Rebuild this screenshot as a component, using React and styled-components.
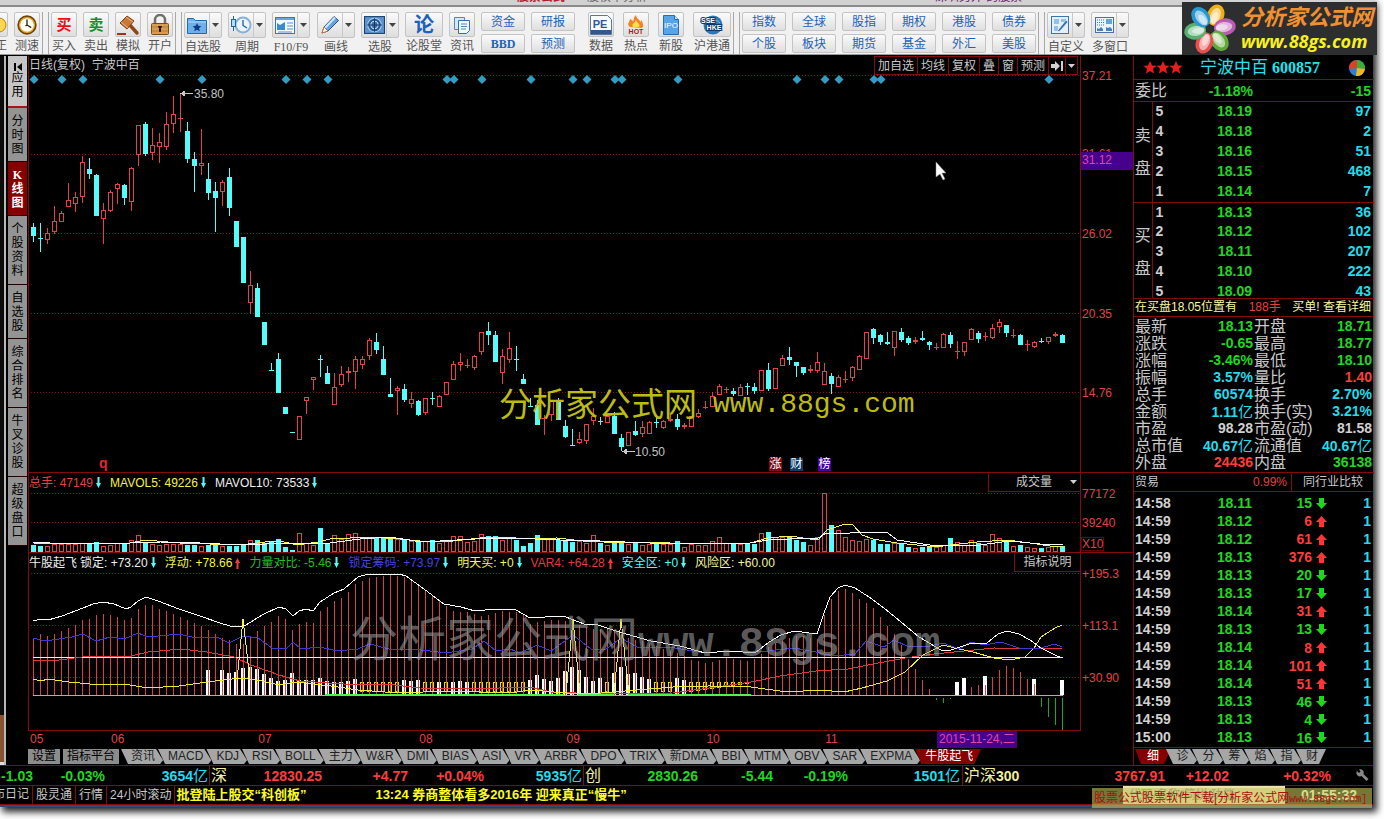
import React from 'react';
import styled, { createGlobalStyle } from 'styled-components';

const GlobalStyle = createGlobalStyle`
  * {
    box-sizing: border-box;
  }

  body {
    margin: 0;
    background: #fff;
    color: #c8c8c8;
    font-family: 'Liberation Sans', 'Noto Sans CJK SC', sans-serif;
    font-size: 12px;
    line-height: 16px;
  }

  button, input, select {
    margin: 0;
    padding: 0;
    border: 0;
    border-radius: 0;
    background: none;
    color: inherit;
    font: inherit;
  }

  a {
    color: inherit;
    text-decoration: none;
  }

  table {
    border-collapse: collapse;
    border-spacing: 0;
  }

  td, th {
    padding: 0;
    font-weight: normal;
    text-align: left;
  }
`;

const RED = '#e04444';
const CYAN = '#54fcfc';
const LINE = '#800c0c';

const colors = {
  green: '#1fd81f',
  red: '#ff3c3c',
  cyan: '#22dcec',
  white: '#d0d0d0',
};

const Page = styled.div`
  min-height: 100vh;
  padding: 0 11px 13px 0;
  overflow: hidden;
`;

const Frame = styled.div`
  position: relative;
  background: #000;
  box-shadow: 3px 4px 7px 1px rgba(0, 0, 0, 0.85);
  border-bottom: 2px solid #2c4c70;
`;

/* ---------- top bars ---------- */

const TitleStrip = styled.div`
  display: flex;
  align-items: flex-end;
  height: 7px;
  overflow: hidden;
  background: #d2d2d2;
  border-bottom: 2px solid #8a8a8a;
  padding-left: 517px;
  padding-bottom: 2px;
  gap: 24px;
  line-height: 12px;
`;

const StripText = styled.span`
  color: ${({ $color }) => $color};
  width: ${({ $width }) => $width}px;
  white-space: nowrap;
  font-weight: ${({ $bold }) => ($bold ? 'bold' : 'normal')};
`;

const Toolbar = styled.header`
  display: flex;
  height: 48px;
  padding-top: 5px;
  background: #f1f1f1;
  border-bottom: 1px solid #9a9a9a;
  color: #555;
  overflow: hidden;
`;

const Group = styled.div`
  display: flex;
  flex-shrink: 0;
  gap: ${({ $gap }) => $gap || 6}px;
  padding-left: ${({ $left }) => $left || 0}px;
`;

const Divider = styled.div`
  flex-shrink: 0;
  width: 7px;
  height: 42px;
  margin-left: 2px;
  border-left: 1px solid #a8a8a8;
  border-right: 1px solid #a8a8a8;
`;

const Tool = styled.button`
  display: flex;
  flex-direction: column;
  align-items: center;
  gap: 1px;
  width: ${({ $wide }) => ($wide ? 38 : 26)}px;
  white-space: nowrap;
`;

const ToolFace = styled.span`
  display: flex;
  align-items: center;
  justify-content: center;
  width: 100%;
  height: 26px;
  border: 1px solid #c4c4c4;
  border-radius: 2px;
  background: linear-gradient(#fafafa, #dedede);
`;

const ToolArrow = styled.span`
  display: flex;
  align-items: center;
  justify-content: center;
  width: 12px;
  height: 24px;
  border-left: 1px solid #c8c8c8;
`;

const FaceIcon = styled.span`
  display: flex;
  flex: 1;
  align-items: center;
  justify-content: center;
`;

const ToolLabel = styled.span`
  font-family: ${({ $serif }) => ($serif ? "'Liberation Serif', serif" : 'inherit')};
`;

const CutTool = styled.div`
  display: flex;
  justify-content: flex-end;
  width: 8px;
  overflow: hidden;
`;

const PairColumn = styled.div`
  display: flex;
  flex-direction: column;
  gap: 3px;
`;

const SmallButton = styled.button`
  width: 44px;
  height: 19px;
  border: 1px solid #c4c4c4;
  border-radius: 2px;
  background: linear-gradient(#fafafa, #dfdfdf);
  color: #1c62b8;
  line-height: 16px;
  font-family: ${({ $serif }) => ($serif ? "'Liberation Serif', serif" : 'inherit')};
  font-weight: ${({ $serif }) => ($serif ? 'bold' : 'normal')};
`;

const Logo = styled.a`
  position: absolute;
  z-index: 2;
  top: 2px;
  right: -4px;
  display: flex;
  align-items: center;
  width: 195px;
  height: 53px;
  background: #2c2e2f;
`;

const LogoText = styled.span`
  display: flex;
  flex-direction: column;
  padding-left: 3px;
  font-weight: bold;
  font-style: italic;
  white-space: nowrap;
`;

const LogoName = styled.span`
  color: #f09030;
  font-size: 22px;
  line-height: 25px;
`;

const LogoUrl = styled.span`
  color: #f8f020;
  font-family: 'Open Sans', sans-serif;
  font-size: 18px;
  line-height: 22px;
`;

/* ---------- body ---------- */

const Body = styled.main`
  display: grid;
  grid-template-columns: 28px minmax(0, 1fr) 53px 240px;
  padding-top: 1px;
`;

const SideColumn = styled.div`
  display: flex;
`;

const Edge = styled.div`
  display: flex;
  flex-direction: column;
  justify-content: flex-end;
  width: 6px;
  margin-right: 2px;
  background: #0c0c0c;
  border-right: 2px solid #b8b8b8;
`;

const EdgeBlock = styled.div`
  height: 50px;
  background: #8a5230;
  border-bottom: 3px solid #ddd;
`;

const SideNav = styled.nav`
  width: 19px;
`;

const SideTab = styled.button`
  display: flex;
  flex-direction: column;
  align-items: center;
  justify-content: center;
  width: 19px;
  height: ${({ $chars }) => ($chars > 3 ? 69 : 54)}px;
  border-bottom: 1px solid #200;
  background: ${({ $active }) => ($active ? '#860000' : '#949494')};
  color: ${({ $active }) => ($active ? '#fff' : '#000')};
  font-weight: ${({ $active }) => ($active ? 'bold' : 'normal')};
  font-family: 'Liberation Serif', 'Noto Sans CJK SC', serif;
  line-height: 14px;
`;

const LightTab = styled(SideTab)`
  height: 52px;
  border-bottom: 2px solid #a01818;
  background: #c6c6c6;
`;

const Main = styled.div`
  display: grid;
  grid-template-rows: 417px 80px 178px 18px 16px;
  min-width: 0;
`;

const Pane = styled.section`
  position: relative;
  min-width: 0;
  border-left: 1px solid ${LINE};
  border-bottom: 1px solid ${LINE};
  overflow: hidden;
`;

const Plot = styled.svg`
  position: absolute;
  inset: 0;
  width: 100%;
  height: 100%;
`;

const PaneHead = styled.div`
  position: relative;
  z-index: 1;
  display: flex;
  justify-content: space-between;
  height: 19px;
  line-height: 18px;
  white-space: nowrap;
`;

const HeadTools = styled.div`
  display: flex;
  height: 19px;
  margin-right: 2px;
  border: 1px solid ${LINE};
  border-right: 0;
`;

const HeadButton = styled.button`
  padding: 0 3px;
  border-right: 1px solid ${LINE};
  line-height: 16px;
`;

const IconButton = styled(HeadButton)`
  display: flex;
  align-items: center;
  padding: 0 2px;
`;

const Legend = styled.div`
  display: flex;
  gap: 9px;
  line-height: 20px;
`;

const LegendItem = styled.span`
  display: flex;
  align-items: center;
  gap: 3px;
  color: ${({ $color }) => $color};
`;

const VolumeBox = styled.label`
  display: flex;
  align-items: center;
  width: 92px;
  padding: 0 3px 0 27px;
  border-left: 1px solid ${LINE};
  border-bottom: 1px solid ${LINE};
`;

const VolumeSelect = styled.select`
  flex: 1;
  appearance: none;
  line-height: 18px;
`;

const InfoButton = styled.button`
  width: 66px;
  border-left: 1px solid ${LINE};
  border-bottom: 1px solid ${LINE};
  line-height: 18px;
`;

const PlotNote = styled.span`
  position: absolute;
  left: ${({ $x }) => $x}px;
  top: ${({ $y }) => $y}px;
  color: #c0c0c0;
`;

const Badge = styled.button`
  position: absolute;
  bottom: 1px;
  left: ${({ $x }) => $x}px;
  width: 13px;
  height: 13px;
  background: ${({ $bg }) => $bg};
  color: #fff;
  line-height: 13px;
`;

const QMark = styled.span`
  position: absolute;
  left: 70px;
  bottom: 1px;
  color: #e02828;
  font-size: 14px;
  font-weight: bold;
`;

const Watermark = styled.span`
  position: absolute;
  left: 470px;
  top: 329px;
  display: flex;
  gap: 16px;
  color: #bcbc10;
  font-size: 33px;
  line-height: 40px;
  white-space: nowrap;
`;

const WatermarkUrl = styled.span`
  font-family: 'Liberation Mono', monospace;
  font-size: ${({ $size }) => $size}px;
  font-weight: ${({ $bold }) => ($bold ? 'bold' : 'normal')};
`;

const GrayMark = styled.span`
  position: absolute;
  left: 321px;
  top: 59px;
  color: rgba(150, 150, 150, 0.62);
  font-size: 48px;
  line-height: 56px;
  white-space: nowrap;
`;

const Cursor = styled.svg`
  position: absolute;
  left: 906px;
  top: 105px;
`;

const DateAxis = styled.div`
  position: relative;
  color: ${RED};
  line-height: 17px;
`;

const DateLabel = styled.span`
  position: absolute;
  left: ${({ $left }) => $left}%;
  padding-left: 2px;
`;

const DateNow = styled.span`
  position: absolute;
  left: 86.4%;
  width: 80px;
  background: #45008c;
  color: #e044a8;
  text-align: center;
  white-space: nowrap;
`;

const TabRow = styled.nav`
  display: flex;
  height: 15px;
  overflow: hidden;
  line-height: 15px;
  white-space: nowrap;
`;

const SlantGroup = styled.div`
  display: flex;
  padding-left: 4px;
`;

const PlainTab = styled.button`
  height: 15px;
  margin-right: 3px;
  padding: 0 4px;
  background: #8c8c8c;
  color: #000;
  line-height: 15px;
`;

const SlantTab = styled.button`
  height: 15px;
  margin-left: -5px;
  padding: 0 8px 0 10px;
  flex: ${({ $fill }) => ($fill ? '0 0 31px' : '0 0 auto')};
  background: #a6a6a6;
  color: #222;
  line-height: 15px;
  clip-path: polygon(0 0, calc(100% - 7px) 0, 100% 75%, calc(100% - 3px) 100%, 7px 100%);
`;

const ActiveTab = styled(SlantTab)`
  background: #860000;
  color: #fff;
  clip-path: polygon(0 0, 100% 0, calc(100% - 7px) 100%, 6px 100%);
`;

const FinalTab = styled(SlantTab)`
  clip-path: polygon(0 0, 100% 0, calc(100% - 7px) 100%, 7px 100%);
`;

const SmallTabs = styled(TabRow)`
  margin-top: 1px;
  padding-left: 6px;
`;

const SmallActive = styled(ActiveTab)`
  flex: 0 0 36px;
  padding: 0;
`;

/* ---------- price axis ---------- */

const Axis = styled.div`
  display: grid;
  grid-template-rows: 417px 80px 178px 18px 16px;
  color: ${RED};
`;

const AxisPane = styled.div`
  position: relative;
  border-left: 1px solid ${LINE};
  border-bottom: ${({ $open }) => ($open ? 'none' : `1px solid ${LINE}`)};
`;

const AxisLabel = styled.span`
  position: absolute;
  left: 1px;
  top: ${({ $y }) => $y - 8}px;
`;

const AxisNow = styled.span`
  position: absolute;
  left: 0;
  right: 0;
  top: 96px;
  height: 18px;
  padding-left: 1px;
  background: #45008c;
  color: #e044a8;
  line-height: 17px;
`;

const AxisUnit = styled.span`
  position: absolute;
  left: 0;
  bottom: 1px;
  width: 23px;
  height: 14px;
  border: 1px solid #600;
  line-height: 13px;
`;

/* ---------- quote panel ---------- */

const Quote = styled.aside`
  display: grid;
  grid-template-rows: 24px 22px 197px 18px 156px 19px 256px 17px;
  border-left: 1px solid ${LINE};
`;

const QuoteHead = styled.h1`
  display: flex;
  align-items: center;
  gap: 4px;
  margin: 0;
  padding: 0 9px 0 9px;
  border-bottom: 1px solid ${LINE};
  color: #22e4f0;
  font-size: 17px;
  font-weight: normal;
  line-height: 22px;
`;

const Stars = styled.svg`
  margin-right: 13px;
`;

const Code = styled.span`
  flex: 1;
  font-family: 'Liberation Serif', serif;
  font-size: 16px;
  font-weight: bold;
`;

const Num = styled.span`
  color: ${({ $color }) => colors[$color]};
  font-size: 14px;
  font-weight: bold;
  text-align: right;

  small {
    font-size: 15px;
    font-weight: normal;
  }
`;

const Ratio = styled.div`
  display: grid;
  grid-template-columns: 40px 78px 1fr;
  align-items: center;
  padding: 0 3px 0 1px;
  border-bottom: 1px solid ${LINE};
`;

const BigLabel = styled.span`
  font-size: 16px;
  white-space: nowrap;
`;

const BookWrap = styled.div`
  height: 197px;
  overflow: hidden;
  border-bottom: 1px solid ${LINE};
`;

const Book = styled.table`
  width: 100%;
  table-layout: fixed;
  font-size: 14px;
  line-height: 18px;

  tbody + tbody {
    border-top: 1px solid ${LINE};
  }

  tr {
    height: 20px;
  }
`;

const BookSide = styled.th`
  width: 18px;
  border-right: 1px solid ${LINE};
  font-size: 16px;
  line-height: 33px;
  text-align: center;
`;

const BookCell = styled.td`
  width: ${({ $width }) => ($width ? `${$width}px` : 'auto')};
  padding: 0 3px;
  text-align: ${({ $left }) => ($left ? 'left' : 'right')};
  vertical-align: top;
`;

const Notice = styled.a`
  display: flex;
  justify-content: space-between;
  padding: 0 3px 0 1px;
  border-bottom: 1px solid ${LINE};
  color: #f8f89c;
  line-height: 16px;
  white-space: nowrap;
`;

const Hot = styled.span`
  color: ${RED};
`;

const Stats = styled.dl`
  display: grid;
  grid-template-columns: 118px 118px;
  grid-auto-rows: 17px;
  column-gap: 1px;
  margin: 0;
  padding: 1px 2px 0 1px;
  border-bottom: 1px solid ${LINE};
`;

const Stat = styled.div`
  display: flex;
  justify-content: space-between;
  line-height: 17px;
  white-space: nowrap;

  dd {
    margin: 0;
  }
`;

const Sector = styled.div`
  display: grid;
  grid-template-columns: 40px 118px 1fr;
  border-bottom: 1px solid ${LINE};
  line-height: 18px;
`;

const SectorName = styled.span`
  padding-left: 1px;
`;

const SectorRate = styled.span`
  padding-right: 4px;
  border-right: 1px solid ${LINE};
  color: ${RED};
  text-align: right;
`;

const Compare = styled.button`
  text-align: center;
`;

const TickWrap = styled.div`
  padding: 2px 3px 0 1px;
  border-bottom: 1px solid ${LINE};
`;

const Ticks = styled.table`
  width: 100%;
  height: 253px;
  table-layout: fixed;
  line-height: 16px;
`;

const TickCell = styled.td`
  width: ${({ $width }) => ($width ? `${$width}px` : 'auto')};
  text-align: ${({ $left }) => ($left ? 'left' : 'right')};
`;

const TickVolume = styled.span`
  display: flex;
  align-items: center;
  justify-content: flex-end;
  gap: 4px;
`;

/* ---------- bottom bars ---------- */

const IndexBar = styled.section`
  display: grid;
  grid-template-columns: 209px 374px 379px 1fr;
  height: 21px;
  border-top: 1px solid ${LINE};
  border-bottom: 1px solid ${LINE};
`;

const IndexCell = styled.div`
  display: grid;
  grid-template-columns: ${({ $cols }) => $cols};
  align-items: center;
  white-space: nowrap;

  & + & {
    border-left: 1px solid ${LINE};
  }
`;

const IndexName = styled.span`
  padding-left: 1px;
  color: #f0f0a0;
  font-size: 16px;

  b {
    font-size: 14px;
  }
`;

const WrenchButton = styled.button`
  display: flex;
  justify-self: end;
  margin-right: 4px;
`;

const NewsBar = styled.footer`
  position: relative;
  display: flex;
  height: 19px;
  line-height: 17px;
  border-bottom: 1px solid ${LINE};
  white-space: nowrap;
`;

const NewsTab = styled.button`
  height: 18px;
  padding: 0 3px;
  border-right: 1px solid ${LINE};
`;

const CutTab = styled(NewsTab)`
  display: flex;
  justify-content: flex-end;
  width: 33px;
  overflow: hidden;
`;

const News = styled.a`
  padding-left: 1px;
  margin-right: 68px;
  color: #fcfc20;
  font-size: 13px;
  font-weight: bold;
`;

const Search = styled.input`
  width: 162px;
  height: 18px;
  margin-left: auto;
  padding-left: 6px;
  background: #e8e4b0;

  &::placeholder {
    color: #777;
    opacity: 1;
  }
`;

const Clock = styled.time`
  width: 88px;
  color: #fcfcdc;
  font-size: 14px;
  font-weight: bold;
  line-height: 18px;
  text-align: center;
`;

const Promo = styled.a`
  position: absolute;
  top: 2px;
  right: 1px;
  width: 280px;
  height: 20px;
  padding-left: 2px;
  background: rgba(196, 196, 90, 0.6);
  color: #a81010;
  line-height: 20px;
`;

const PromoUrl = styled.span`
  font-family: 'Liberation Mono', monospace;
  font-size: 10px;
`;

/* ---------- data ---------- */

// [up or down, high, body top, body bottom, low]
const candles = [
  ['d', 223, 227, 236, 242], ['d', 223, 238, 239, 252], ['u', 228, 233, 240, 244], ['u', 206, 221, 232, 234],
  ['u', 211, 213, 222, 222], ['u', 183, 200, 207, 207], ['u', 192, 197, 204, 212], ['u', 156, 162, 197, 203],
  ['d', 158, 169, 174, 179], ['d', 174, 175, 216, 216], ['u', 203, 210, 219, 244], ['u', 190, 192, 211, 212],
  ['u', 183, 184, 189, 204], ['d', 184, 185, 198, 205], ['u', 167, 168, 202, 211], ['u', 125, 125, 155, 166],
  ['d', 122, 124, 154, 156], ['u', 128, 145, 153, 160], ['u', 133, 142, 147, 163], ['u', 112, 124, 147, 150],
  ['u', 96, 114, 124, 133], ['u', 93, 118, 119, 132], ['d', 122, 131, 159, 163], ['d', 152, 159, 166, 192],
  ['u', 129, 163, 166, 175], ['d', 163, 179, 193, 200], ['d', 182, 191, 198, 232], ['u', 180, 182, 192, 206],
  ['d', 168, 177, 208, 216], ['d', 221, 221, 247, 247], ['d', 237, 237, 283, 283], ['u', 271, 285, 303, 314],
  ['d', 283, 288, 317, 317], ['d', 322, 322, 345, 345], ['d', 363, 370, 371, 371], ['d', 353, 359, 393, 393],
  ['d', 407, 407, 414, 414], ['d', 432, 432, 433, 433], ['u', 416, 416, 440, 440], ['u', 397, 397, 401, 414],
  ['u', 377, 377, 380, 390], ['d', 355, 359, 360, 377], ['d', 366, 373, 384, 384], ['u', 373, 387, 405, 405],
  ['u', 366, 374, 385, 387], ['u', 367, 371, 373, 382], ['u', 356, 359, 372, 389], ['u', 356, 359, 365, 369],
  ['u', 338, 340, 356, 360], ['d', 333, 342, 350, 354], ['d', 346, 359, 375, 375], ['d', 378, 394, 397, 397],
  ['u', 386, 388, 391, 415], ['d', 384, 389, 400, 402], ['u', 392, 399, 404, 408], ['d', 400, 401, 415, 416],
  ['u', 398, 398, 413, 415], ['d', 392, 398, 399, 405], ['u', 395, 396, 407, 407], ['u', 382, 382, 395, 395],
  ['u', 361, 364, 380, 380], ['u', 353, 362, 365, 371], ['u', 359, 365, 366, 368], ['u', 355, 356, 368, 370],
  ['u', 332, 332, 352, 355], ['d', 322, 331, 335, 345], ['d', 331, 335, 362, 362], ['u', 349, 356, 373, 384],
  ['u', 332, 348, 360, 363], ['d', 346, 359, 360, 371], ['d', 374, 379, 384, 384], ['d', 398, 406, 407, 407],
  ['d', 400, 405, 425, 425], ['u', 415, 418, 419, 435], ['u', 400, 400, 415, 421], ['d', 398, 400, 420, 420],
  ['d', 420, 426, 437, 438], ['d', 429, 445, 446, 446], ['u', 432, 439, 443, 444], ['u', 424, 424, 441, 444],
  ['u', 408, 416, 421, 425], ['d', 417, 421, 422, 425], ['u', 416, 416, 423, 423], ['d', 412, 416, 434, 434],
  ['d', 434, 438, 447, 451], ['u', 432, 432, 446, 446], ['d', 421, 431, 435, 436], ['u', 421, 427, 434, 437],
  ['u', 421, 422, 434, 434], ['d', 417, 422, 423, 428], ['u', 420, 421, 428, 429], ['u', 414, 419, 421, 422],
  ['d', 414, 419, 427, 430], ['u', 423, 425, 427, 429], ['u', 416, 416, 427, 427], ['u', 409, 413, 417, 418],
  ['u', 401, 407, 408, 409], ['u', 392, 396, 407, 407], ['u', 384, 386, 395, 395], ['u', 387, 389, 390, 393],
  ['d', 388, 391, 394, 396], ['u', 384, 387, 396, 396], ['d', 383, 386, 387, 395], ['d', 383, 387, 391, 394],
  ['u', 370, 370, 391, 391], ['d', 363, 370, 389, 391], ['u', 368, 368, 389, 389], ['u', 355, 358, 366, 366],
  ['d', 347, 357, 360, 365], ['d', 362, 362, 366, 377], ['d', 367, 367, 373, 375], ['u', 365, 369, 371, 373],
  ['u', 352, 362, 371, 373], ['u', 363, 371, 385, 385], ['d', 373, 376, 384, 394], ['u', 375, 377, 387, 387],
  ['u', 371, 379, 380, 383], ['u', 366, 367, 378, 381], ['u', 355, 356, 370, 370], ['u', 332, 332, 359, 359],
  ['d', 328, 329, 338, 344], ['d', 334, 335, 342, 345], ['d', 332, 342, 344, 345], ['u', 331, 331, 348, 356],
  ['d', 328, 332, 340, 342], ['d', 336, 338, 343, 345], ['u', 337, 340, 342, 344], ['d', 331, 338, 340, 341],
  ['d', 341, 342, 345, 350], ['u', 343, 347, 348, 350], ['u', 333, 334, 348, 348], ['d', 332, 335, 344, 348],
  ['u', 341, 351, 352, 359], ['u', 342, 342, 352, 356], ['u', 328, 329, 340, 340], ['d', 331, 333, 339, 343],
  ['u', 332, 336, 337, 341], ['u', 324, 328, 338, 339], ['u', 319, 322, 327, 333], ['d', 325, 325, 333, 337],
  ['u', 329, 335, 336, 338], ['d', 334, 335, 345, 345], ['u', 340, 344, 345, 351], ['u', 341, 342, 347, 348],
  ['d', 338, 341, 342, 343], ['u', 337, 337, 342, 344], ['u', 332, 334, 336, 337], ['d', 334, 335, 343, 343],
];

const volumes = [
  7, 6, 6, 8, 8, 8, 8, 9, 8, 10, 6, 7, 9, 8, 12, 17, 10, 8, 7, 8, 8, 8, 7, 7, 6, 7, 7, 6, 6, 6,
  8, 12, 12, 9, 10, 13, 5, 2, 19, 9, 7, 24, 9, 17, 13, 18, 19, 15, 14, 15, 15, 14, 13, 12, 11, 10, 11, 12, 9, 12,
  16, 16, 10, 11, 18, 16, 16, 12, 15, 12, 6, 9, 17, 14, 14, 12, 11, 10, 11, 9, 17, 9, 7, 10, 10, 8, 9, 7, 8, 8,
  8, 8, 11, 5, 8, 7, 7, 11, 15, 9, 8, 8, 8, 8, 19, 20, 15, 15, 15, 12, 10, 7, 15, 59, 27, 22, 15, 12, 11, 13,
  12, 8, 8, 9, 8, 5, 4, 5, 5, 5, 7, 14, 10, 7, 12, 9, 7, 18, 14, 10, 6, 7, 5, 4, 4, 5, 6, 6,
];

const strength = [
  58, 62, 60, 62, 65, 68, 71, 76, 77, 81, 82, 81, 79, 76, 78, 87, 91, 91, 87, 85, 82, 79, 76, 73, 70, 66, 62, 58, 56, 52,
  52, 59, 65, 70, 74, 80, 77, 66, 72, 74, 73, 85, 89, 95, 98, 104, 112, 115, 118, 119, 120, 121, 120, 119, 116, 112, 106, 100, 95, 90,
  85, 84, 84, 82, 80, 81, 83, 85, 84, 84, 82, 72, 74, 75, 76, 76, 75, 72, 71, 69, 67, 67, 67, 65, 62, 58, 56, 55, 52, 50,
  47, 45, 43, 40, 36, 35, 33, 34, 36, 38, 37, 36, 35, 37, 42, 49, 53, 56, 58, 60, 60, 58, 57, 81, 97, 105, 107, 103, 97, 93,
  88, 79, 70, 62, 51, 37, 27, 16, 7, 0, 0, 0, 0, 0, 9, 11, 11, 19, 26, 30, 28, 24, 17, 12, 0, 0, 0, 0,
];

const whiteBars = {
  25: 25, 27: 25, 28: 22, 29: 23, 30: 27, 31: 28, 32: 26, 33: 21, 34: 17, 35: 14, 36: 15, 37: 22, 38: 15, 39: 15,
  40: 15, 41: 17, 42: 14, 43: 13, 44: 13, 45: 14, 46: 16, 53: 15, 54: 14, 55: 15, 58: 13, 60: 13, 61: 14, 62: 13,
  71: 15, 72: 20, 73: 16, 74: 14, 75: 17, 76: 24, 77: 28, 78: 25, 79: 18, 80: 14, 81: 17, 83: 22, 84: 28, 85: 21,
  86: 22, 87: 18, 88: 16, 92: 17, 93: 15, 132: 13, 133: 17, 136: 19, 143: 16, 147: 15,
};

const greenBars = { 129: 2, 130: 5, 131: 1, 144: 9, 145: 19, 146: 27, 147: 32 };

const diamonds = [
  34, 62, 83, 160, 202, 286, 307, 328, 447, 454, 482, 531, 573, 587, 615, 622, 678, 797, 825, 839, 874, 881, 1049,
];

const lines = {
  vol5: '33,543 75,544 130,543 145,540 180,543 240,545 265,542 280,541 297,545 318,542 330,539 350,538 370,537 400,539 430,542 453,541 480,538 508,537 523,539 557,538 583,541 603,542 670,543 703,544 750,543 768,538 790,536 810,539 818,540 827,530 845,524 853,525 862,535 873,539 897,543 917,545 937,547 950,545 977,542 1007,540 1030,543 1050,546 1063,547',
  vol10: '33,542 50,543 130,543 160,542 200,543 240,545 290,543 300,544 330,543 360,539 390,537 415,541 440,541 475,539 510,538 560,540 600,541 650,543 750,543 768,540 790,539 818,538 827,533 850,533 880,532 888,533 897,540 930,545 960,546 980,545 1010,541 1040,544 1063,545',
  white: '33,621 41,619 48,620 62,616 83,608 93,604 103,602 114,604 126,609 131,607 138,601 146,597 158,601 179,609 200,616 220,623 230,626 238,627 246,625 262,615 279,607 286,609 293,616 299,611 306,609 313,611 320,602 334,593 344,589 358,577 368,574 399,574 406,576 424,589 444,604 461,607 475,611 496,609 516,610 530,618 545,617 559,616 566,617 584,624 598,625 619,632 651,641 680,646 705,653 730,651 755,653 769,642 781,635 794,631 817,634 824,613 830,597 838,588 845,585 855,588 869,597 884,608 901,622 919,637 941,650 951,650 969,644 987,643 998,634 1007,631 1019,634 1030,640 1041,648 1055,655 1062,658',
  blue: '33,638 45,641 59,639 72,637 83,634 96,641 110,637 124,639 138,633 148,637 179,634 196,638 217,637 229,643 243,636 258,638 272,648 286,649 293,642 301,649 320,647 337,651 358,649 370,644 389,649 413,649 446,653 472,649 484,641 496,651 510,649 520,653 537,645 551,651 573,635 591,649 605,650 621,638 637,647 669,647 705,653 730,651 759,652 794,648 816,652 834,656 855,654 866,641 884,647 894,640 909,647 930,646 943,643 959,649 971,642 984,645 1001,642 1019,648 1037,649 1055,644 1062,647',
  red: '33,660 59,660 90,656 131,656 148,652 181,649 207,652 234,657 251,665 279,675 300,681 344,684 386,684 420,688 468,689 530,687 551,692 601,694 673,693 716,687 751,682 780,676 816,671 848,669 873,664 905,658 934,654 994,648 1062,649',
  yellow: '33,679 41,681 48,679 69,682 90,684 124,684 148,688 179,686 207,682 241,678 262,681 279,685 296,682 331,686 358,690 399,693 448,691 510,693 530,690 566,693 601,693 673,687 709,686 751,687 787,692 819,690 844,692 862,688 887,681 905,672 923,655 943,645 959,649 973,652 994,658 1010,660 1025,657 1034,648 1041,637 1055,628 1062,625',
};

const toolsB = [
  { label: '自选股', icon: 'star', drop: true },
  { label: '周期', icon: 'period', drop: true },
  { label: 'F10/F9', icon: 'news', drop: true, serif: true },
];
const toolsC = [
  { label: '画线', icon: 'pencil', drop: true },
  { label: '选股', icon: 'radar', drop: true },
];

const pairs = [['资金', 'BBD'], ['研报', '预测']];
const markets = [
  ['指数', '个股'], ['全球', '板块'], ['股指', '期货'], ['期权', '基金'], ['港股', '外汇'], ['债券', '美股'],
];

const sideTabs = ['分时图', 'K线图', '个股资料', '自选股', '综合排名', '牛叉诊股', '超级盘口'];

const sells = [[5, '18.19', 97], [4, '18.18', 2], [3, '18.16', 51], [2, '18.15', 468], [1, '18.14', 7]];
const buys = [[1, '18.13', 36], [2, '18.12', 102], [3, '18.11', 207], [4, '18.10', 222], [5, '18.09', 43]];

const stats = [
  ['最新', '18.13', 'green'], ['开盘', '18.71', 'green'],
  ['涨跌', '-0.65', 'green'], ['最高', '18.77', 'green'],
  ['涨幅', '-3.46%', 'green'], ['最低', '18.10', 'green'],
  ['振幅', '3.57%', 'cyan'], ['量比', '1.40', 'red'],
  ['总手', '60574', 'cyan'], ['换手', '2.70%', 'cyan'],
  ['金额', '1.11', 'cyan', '亿'], ['换手(实)', '3.21%', 'cyan'],
  ['市盈', '98.28', 'white'], ['市盈(动)', '81.58', 'white'],
  ['总市值', '40.67', 'cyan', '亿'], ['流通值', '40.67', 'cyan', '亿'],
  ['外盘', '24436', 'red'], ['内盘', '36138', 'green'],
];

const ticks = [
  ['14:58', '18.11', 15, 'd'], ['14:59', '18.12', 6, 'u'], ['14:59', '18.12', 61, 'u'], ['14:59', '18.13', 376, 'u'],
  ['14:59', '18.13', 20, 'd'], ['14:59', '18.13', 17, 'd'], ['14:59', '18.14', 31, 'u'], ['14:59', '18.13', 13, 'd'],
  ['14:59', '18.14', 8, 'u'], ['14:59', '18.14', 101, 'u'], ['14:59', '18.14', 51, 'u'], ['14:59', '18.13', 46, 'd'],
  ['14:59', '18.13', 4, 'd'], ['15:00', '18.13', 16, 'd'],
];

const indicatorTabs = [
  '资讯', 'MACD', 'KDJ', 'RSI', 'BOLL', '主力', 'W&R', 'DMI', 'BIAS', 'ASI', 'VR', 'ARBR', 'DPO', 'TRIX', '新DMA',
  'BBI', 'MTM', 'OBV', 'SAR', 'EXPMA',
];

const dates = [['05', 0], ['06', 7.7], ['07', 21.7], ['08', 37], ['09', 51], ['10', 64.3], ['11', 75.6]];

const legend = [
  ['浮动: +78.66', '#f4f440', 'u'],
  ['力量对比: -5.46', '#20c020', 'd'],
  ['锁定筹码: +73.97', '#4444e0', 'd'],
  ['明天买: +0', '#f4f460', 'd'],
  ['VAR4: +64.28', '#e03c3c', 'u'],
  ['安全区: +0', CYAN, 'd'],
  ['风险区: +60.00', '#f4f4a0', null],
];

/* ---------- icons ---------- */

const Caret = ({ color = '#444' }) => (
  <svg width="7" height="4" aria-hidden="true">
    <path d="M0 0h7L3.500 4z" fill={color} />
  </svg>
);

const ThinArrow = ({ dir }) => (
  <svg width="5" height="12" aria-hidden="true">
    {dir === 'd'
      ? <path d="M1.500 0h2v6H5L2.500 11 0 6h1.500z" fill={CYAN} />
      : <path d="M1.500 12h2V6H5L2.500 1 0 6h1.500z" fill="#f03c3c" />}
  </svg>
);

const FatArrow = ({ dir }) => (
  <svg width="11" height="11" aria-hidden="true">
    {dir === 'd'
      ? <path d="M3 0h5v5h3L5.500 11 0 5h3z" fill="#18dc18" />
      : <path d="M3 11h5V6h3L5.500 0 0 6h3z" fill="#ff3434" />}
  </svg>
);

const Icon = ({ name }) => {
  switch (name) {
    case 'clock':
      return (
        <svg width="20" height="20" viewBox="0 0 20 20">
          <circle cx="10" cy="10" r="8.500" fill="#fffdf2" stroke="#6e4408" strokeWidth="2.400" />
          <circle cx="10" cy="10" r="7.400" fill="none" stroke="#e8a828" strokeWidth="1.300" />
          <path d="M10 4.500V10l4.200 2.600M10 10l-1.500 1" stroke="#222" strokeWidth="1.300" fill="none" />
        </svg>
      );
    case 'coin':
      return (
        <svg width="24" height="20" viewBox="0 0 24 20">
          <circle cx="16" cy="10" r="7" fill="#fcd850" stroke="#c08010" />
        </svg>
      );
    case 'gavel':
      return (
        <svg width="24" height="22" viewBox="0 0 24 22">
          <path d="M12 9l9 10" stroke="#8c4a18" strokeWidth="3.500" strokeLinecap="round" />
          <path d="M4 9l7-7 7 5-7 8z" fill="#c87838" stroke="#7c3c10" />
          <path d="M5 8l7 6M10 3l7 5" stroke="#f0b888" />
          <path d="M1 19h9v2H1z" fill="#a03018" />
        </svg>
      );
    case 'lock':
      return (
        <svg width="22" height="22" viewBox="0 0 22 22">
          <path d="M6 9V6a5 5 0 0 1 10 0v4" fill="none" stroke="#707070" strokeWidth="2.500" />
          <rect x="2.500" y="9.500" width="17" height="11" rx="1" fill="#d89c50" stroke="#7c4c14" />
          <path d="M3 13h16M3 17h16" stroke="#b87c30" />
          <path d="M9.500 12.500h3l-1 2v3h-1v-3z" fill="#201000" stroke="#201000" />
        </svg>
      );
    case 'star':
      return (
        <svg width="20" height="18" viewBox="0 0 20 18">
          <path d="M.5 2.500h6l2 2h11v13H.5z" fill="#6cb0ec" stroke="#2468b0" />
          <path d="M1 6h18" stroke="#b4dcfc" />
          <path d="M10 7l1.300 2.800 3 .4-2.200 2 .6 3-2.700-1.500-2.700 1.500.6-3-2.200-2 3-.4z" fill="#103c80" />
        </svg>
      );
    case 'period':
      return (
        <svg width="21" height="20" viewBox="0 0 21 20">
          <circle cx="12" cy="10" r="7.500" fill="#eaf4fc" stroke="#88b0d8" strokeWidth="2" />
          <path d="M12 5v5.500l4 2.500" fill="none" stroke="#1c5ca8" strokeWidth="1.300" />
          <path d="M2.500 1v15" stroke="#1c64b8" />
          <rect x=".5" y="4.500" width="4" height="7" fill="#b8dcf8" stroke="#1c64b8" />
        </svg>
      );
    case 'news':
      return (
        <svg width="20" height="17" viewBox="0 0 20 17">
          <rect x=".5" y=".5" width="19" height="16" fill="#f4faff" stroke="#3878c0" />
          <path d="M1 1h18v2H1z" fill="#6ca4dc" />
          <path d="M2 6l3 2 5-3v8H2z" fill="#3c88d8" />
          <path d="M12 6h6M12 9h6M12 12h6M3 15h14" stroke="#5890c8" />
        </svg>
      );
    case 'pencil':
      return (
        <svg width="20" height="20" viewBox="0 0 20 20">
          <path d="M2 18l2-6L14 1.500l4.500 4L8 16z" fill="#64a4e4" stroke="#28508c" />
          <path d="M5 13L15 2.500" stroke="#d0e8fc" strokeWidth="2" />
          <path d="M2 18l2-6 4 4z" fill="#fff" stroke="#d07030" />
        </svg>
      );
    case 'radar':
      return (
        <svg width="21" height="18" viewBox="0 0 20 17">
          <rect x=".5" y=".5" width="19" height="16" fill="#5c94cc" stroke="#1c3c70" />
          <circle cx="10" cy="8.500" r="6.500" fill="#285890" stroke="#a4d0f8" />
          <circle cx="10" cy="8.500" r="3.500" fill="#3c70a8" stroke="#c8e4fc" />
          <path d="M10 2v13M3 8.500h14" stroke="#183868" />
        </svg>
      );
    case 'docs':
      return (
        <svg width="18" height="18" viewBox="0 0 18 18">
          <path d="M1.500 1.500h10v12h-10z" fill="#d4e8fa" stroke="#4c88c4" />
          <path d="M5.500 4.500h11v10l-3 3h-8z" fill="#f0f8ff" stroke="#3070b0" />
          <path d="M8 8h6M8 10.500h6M8 13h5" stroke="#4c88c4" />
        </svg>
      );
    case 'pe':
      return (
        <svg width="22" height="20" viewBox="0 0 22 20">
          <path d="M.5.500h17l4 4v15H.5z" fill="#f8fcff" stroke="#5878a0" />
          <path d="M1 15h20v4H1z" fill="#34588c" />
          <text x="10" y="13" textAnchor="middle" fontFamily="Liberation Sans" fontSize="11" fontWeight="bold" fill="#34588c">PE</text>
        </svg>
      );
    case 'hot':
      return (
        <svg width="20" height="20" viewBox="0 0 20 20">
          <path d="M4 12C0 9 4 7 4 4c3 1 3 3 3 3 1-2 0-4 3-7 0 4 4 4 4 7l2-2c0 4 3 5 0 8z" fill="#f48028" />
          <path d="M7 12c-2-3 2-4 3-7 1 3 5 4 3 7z" fill="#fce048" />
          <text x="10" y="19" textAnchor="middle" fontFamily="Liberation Sans" fontSize="7" fontWeight="bold" fill="#c81010">HOT</text>
        </svg>
      );
    case 'ipo':
      return (
        <svg width="16" height="20" viewBox="0 0 16 20">
          <path d="M.5.500h11l4 4v15H.5z" fill="#58a4e8" stroke="#2470b8" />
          <path d="M11.500.500v4h4" fill="#c8e4fc" stroke="#2470b8" />
          <text x="8" y="13" textAnchor="middle" fontFamily="Liberation Sans" fontSize="8" fill="#fff">IPO</text>
        </svg>
      );
    case 'sse':
      return (
        <svg width="24" height="22" viewBox="0 0 24 22">
          <circle cx="13" cy="11" r="9.500" fill="#2c78b8" />
          <path d="M4 8c4-4 12-3 16 1" stroke="#80c0ec" fill="none" />
          <text x="8" y="9" textAnchor="middle" fontFamily="Liberation Sans" fontSize="7" fontWeight="bold" fill="#fff" stroke="#0c3868" strokeWidth="2" paintOrder="stroke">SSE</text>
          <text x="14" y="16" textAnchor="middle" fontFamily="Liberation Sans" fontSize="7" fontWeight="bold" fill="#fff" stroke="#0c3868" strokeWidth="2" paintOrder="stroke">HKE</text>
        </svg>
      );
    case 'custom':
      return (
        <svg width="18" height="18" viewBox="0 0 18 18">
          <rect x=".5" y=".5" width="17" height="17" fill="#e4f0fc" stroke="#3c74b4" />
          <path d="M3 8V3h5v5zM10 3h5v3h-5zM3 10h4v5H3z" fill="#94c0ec" />
          <path d="M7 14L15 4l2 2-8 9-3 1z" fill="#3c74b4" stroke="#fff" strokeWidth=".6" />
        </svg>
      );
    case 'windows':
      return (
        <svg width="19" height="16" viewBox="0 0 19 16">
          <rect x=".5" y=".5" width="18" height="15" fill="#eaf4ff" stroke="#4c70a8" />
          <path d="M2 3h7M2 5.500h7M2 8h7" stroke="#4c70a8" strokeDasharray="1 1" />
          <path d="M11 2h6v5h-6z" fill="#6ca0d8" />
          <path d="M2 14v-3l2 1 2-2 2 2v2zM11 14v-4l2 1 2-1 2 2v2z" fill="#4880c4" />
        </svg>
      );
    default:
      return null;
  }
};

const TextFace = styled.span`
  color: ${({ $color }) => $color};
  font-size: ${({ $size }) => $size}px;
  font-weight: bold;
  line-height: 22px;
`;

const ToolButton = ({ label, icon, drop, wide, serif, children }) => (
  <Tool $wide={drop || wide}>
    <ToolFace>
      <FaceIcon>{children || <Icon name={icon} />}</FaceIcon>
      {drop && <ToolArrow><Caret /></ToolArrow>}
    </ToolFace>
    <ToolLabel $serif={serif}>{label}</ToolLabel>
  </Tool>
);

const Flower = () => {
  const petals = ['#f0b018', '#b85cb0', '#60a838', '#e85050', '#58b070', '#2898d0'];
  return (
    <svg width="56" height="52" viewBox="-28 -26 56 52">
      {petals.map((fill, i) => (
        <g key={fill} transform={`rotate(${i * 60 + 22})`}>
          <ellipse cx="0" cy="-15" rx="8.500" ry="11" fill={fill} />
          <ellipse cx="0" cy="-14" rx="5" ry="8.500" fill="#fff" opacity=".55" />
          <ellipse cx="0" cy="-12" rx="3" ry="6" fill="#fff" opacity=".5" />
        </g>
      ))}
      <circle r="4" fill="#2c2e2f" />
    </svg>
  );
};

/* ---------- charts ---------- */

const xAt = i => 33 + i * 7;

const GridLines = ({ ys }) => ys.map(y => (
  <path key={y} d={`M31 ${y + 0.5}H1080`} stroke="#7c1414" strokeDasharray="1 2" />
));

const PriceChart = () => (
  <Plot viewBox="29 56 1051 416" preserveAspectRatio="none" shapeRendering="crispEdges">
    <GridLines ys={[75, 154, 233, 313, 392]} />
    {diamonds.map(x => (
      <path key={x} d={`M${x} 75l4.500 4.500-4.500 4.500-4.500-4.500z`} fill="#349cc4" shapeRendering="auto" />
    ))}
    {candles.map(([dir, high, top, bottom, low], i) => {
      const x = xAt(i);
      const color = dir === 'u' ? RED : CYAN;
      const hollow = dir === 'u' && bottom - top > 2;
      return (
        <g key={i} fill={color}>
          {hollow ? (
            <>
              <rect x={x} y={high} width="1" height={top - high} />
              <rect x={x} y={bottom} width="1" height={low - bottom} />
              <rect x={x - 1.5} y={top + 0.5} width="4" height={bottom - top - 1} fill="none" stroke={color} />
            </>
          ) : (
            <>
              <rect x={x} y={high} width="1" height={low - high} />
              <rect x={x - 2} y={top} width="5" height={bottom - top} />
            </>
          )}
        </g>
      );
    })}
    <path d="M182 93.500h11M624 451.500h11" stroke="#c8c8c8" />
    <path d="M180 93.500l5-3v6zM622 451.500l5-3v6z" fill="#c8c8c8" />
  </Plot>
);

const VolumeChart = () => (
  <Plot viewBox="29 473 1051 79" preserveAspectRatio="none" shapeRendering="crispEdges">
    <GridLines ys={[493, 522]} />
    {volumes.map((h, i) => (
      candles[i][0] === 'u'
        ? <rect key={i} x={xAt(i) - 1.5} y={552.5 - h} width="4" height={h - 1} fill="none" stroke={RED} />
        : <rect key={i} x={xAt(i) - 2} y={552 - h} width="5" height={h} fill={CYAN} />
    ))}
    <polyline points={lines.vol5} fill="none" stroke="#f4f460" />
    <polyline points={lines.vol10} fill="none" stroke="#fff" />
  </Plot>
);

const StrengthChart = () => (
  <Plot viewBox="29 553 1051 177" preserveAspectRatio="none" shapeRendering="crispEdges">
    <GridLines ys={[573, 625, 677]} />
    {candles.map((c, i) => (
      i > 46 && i < 103 && !whiteBars[i] && (
        <rect
          key={i}
          x={xAt(i) - 1.5}
          y="682.500"
          width="3"
          height={i > 92 ? 103 - i : 9}
          fill="none"
          stroke="#e8d820"
        />
      )
    ))}
    {Object.entries(whiteBars).map(([i, h]) => (
      <rect key={i} x={xAt(+i) - 2} y={695 - h} width="4" height={h} fill="#fff" />
    ))}
    {strength.map((h, i) => (
      h > 0 && <rect key={i} x={xAt(i)} y={696 - h} width="1" height={h} fill="#d84040" />
    ))}
    {Object.entries(greenBars).map(([i, h]) => (
      <rect key={i} x={xAt(+i)} y="698" width="1" height={h} fill="#20a820" />
    ))}
    <path d="M33 657.500H1063" stroke="#fcfc9c" />
    <path d="M33 695.500H1063" stroke="#40dce8" />
    <path d="M325 694.500H564M578 694.500H614M628 694.500H751" stroke="#50f050" />
    <polyline points={lines.red} fill="none" stroke="#e03838" />
    <polyline points={lines.yellow} fill="none" stroke="#f0e838" />
    <polyline points={lines.blue} fill="none" stroke="#4038d0" />
    <path d="M237 680l6-61 7 61M566 694l7-75 7 75M614 694l7-75 8 75" fill="none" stroke="#f4f040" />
    <polyline points={lines.white} fill="none" stroke="#fff" />
  </Plot>
);

const BookRows = ({ side, rows }) => (
  <tbody>
    {rows.map(([level, price, amount], i) => (
      <tr key={level}>
        {i === 0 && <BookSide rowSpan={5} scope="rowgroup">{side[0]}<br />{side[1]}</BookSide>}
        <BookCell $left $width={20}><Num $color="white">{level}</Num></BookCell>
        <BookCell $width={83}><Num $color="green">{price}</Num></BookCell>
        <BookCell><Num $color="cyan">{amount}</Num></BookCell>
      </tr>
    ))}
  </tbody>
);

const App = () => {
  return (
    <Page>
      <GlobalStyle />
      <Frame>
        <TitleStrip>
          <StripText $color="#b81830" $width={46} $bold>股票公式</StripText>
          <StripText $color="#666" $width={324}>股权平分析</StripText>
          <StripText $color="#702070" $width={96}>深圳另外 的股票</StripText>
        </TitleStrip>

        <Toolbar>
          <CutTool><ToolButton label="修正" icon="coin" /></CutTool>
          <Group $left={6}><ToolButton label="测速" icon="clock" /></Group>
          <Divider />
          <Group $left={2}>
            <ToolButton label="买入"><TextFace $color="#e81010" $size={15}>买</TextFace></ToolButton>
            <ToolButton label="卖出"><TextFace $color="#109030" $size={15}>卖</TextFace></ToolButton>
            <ToolButton label="模拟" icon="gavel" />
            <ToolButton label="开户" icon="lock" />
          </Group>
          <Divider />
          <Group $left={2}>
            {toolsB.map(tool => <ToolButton key={tool.label} {...tool} />)}
          </Group>
          <Group $left={7}>
            {toolsC.map(tool => <ToolButton key={tool.label} {...tool} />)}
            <ToolButton label="论股堂" wide><TextFace $color="#1c60c0" $size={20}>论</TextFace></ToolButton>
            <ToolButton label="资讯" icon="docs" />
          </Group>
          <Group $left={6}>
            {pairs.map(([top, bottom]) => (
              <PairColumn key={top}>
                <SmallButton>{top}</SmallButton>
                <SmallButton $serif={bottom === 'BBD'}>{bottom}</SmallButton>
              </PairColumn>
            ))}
          </Group>
          <Group $left={13} $gap={9}>
            <ToolButton label="数据" icon="pe" />
            <ToolButton label="热点" icon="hot" />
            <ToolButton label="新股" icon="ipo" />
            <ToolButton label="沪港通" icon="sse" wide />
          </Group>
          <Divider />
          <Group $left={2}>
            {markets.map(([top, bottom]) => (
              <PairColumn key={top}>
                <SmallButton>{top}</SmallButton>
                <SmallButton>{bottom}</SmallButton>
              </PairColumn>
            ))}
          </Group>
          <Divider />
          <Group $left={2}>
            <ToolButton label="自定义" icon="custom" drop />
            <ToolButton label="多窗口" icon="windows" drop />
          </Group>
        </Toolbar>

        <Logo href="#home">
          <Flower />
          <LogoText>
            <LogoName>分析家公式网</LogoName>
            <LogoUrl>www.88gs.com</LogoUrl>
          </LogoText>
        </Logo>

        <Body>
          <SideColumn>
            <Edge><EdgeBlock /></Edge>
            <SideNav>
              <LightTab>
                <svg width="8" height="8" aria-hidden="true"><path d="M0 0h2v8H0zM8 0v8L3 4z" fill="#000" /></svg>
                <span>应</span>
                <span>用</span>
              </LightTab>
              {sideTabs.map(tab => (
                <SideTab key={tab} $chars={tab.length} $active={tab === 'K线图'}>
                  {tab.split('').map(ch => <span key={ch}>{ch}</span>)}
                </SideTab>
              ))}
            </SideNav>
          </SideColumn>

          <Main>
            <Pane>
              <PriceChart />
              <PaneHead>
                <span>日线(复权)&nbsp; 宁波中百</span>
                <HeadTools>
                  {['加自选', '均线', '复权', '叠', '窗', '预测'].map(item => (
                    <HeadButton key={item}>{item}</HeadButton>
                  ))}
                  <IconButton aria-label="末页">
                    <svg width="12" height="10"><path d="M0 3h4V0l5 5-5 5V7H0zM10 0h2v10h-2z" fill="#d0d0d0" /></svg>
                  </IconButton>
                  <IconButton aria-label="更多"><Caret color="#d0d0d0" /></IconButton>
                </HeadTools>
              </PaneHead>
              <PlotNote $x={165} $y={30}>35.80</PlotNote>
              <PlotNote $x={606} $y={388}>10.50</PlotNote>
              <QMark>q</QMark>
              <Badge $x={740} $bg="#800818">涨</Badge>
              <Badge $x={761} $bg="#0c3c68">财</Badge>
              <Badge $x={789} $bg="#4400a0">榜</Badge>
              <Watermark>
                分析家公式网
                <WatermarkUrl $size={28}>www.88gs.com</WatermarkUrl>
              </Watermark>
              <Cursor width="12" height="20" viewBox="0 0 12 20">
                <path d="M1 1v15l4-3 3 6 2-1-3-6h4z" fill="#fff" stroke="#888" strokeWidth=".5" />
              </Cursor>
            </Pane>

            <Pane>
              <VolumeChart />
              <PaneHead>
                <Legend>
                  <LegendItem $color={RED}>总手: 47149<ThinArrow dir="d" /></LegendItem>
                  <LegendItem $color="#f4f440">MAVOL5: 49226<ThinArrow dir="d" /></LegendItem>
                  <LegendItem $color="#f0f0f0">MAVOL10: 73533<ThinArrow dir="d" /></LegendItem>
                </Legend>
                <VolumeBox>
                  <VolumeSelect aria-label="副图指标" defaultValue="成交量">
                    <option>成交量</option>
                  </VolumeSelect>
                  <Caret color="#d0d0d0" />
                </VolumeBox>
              </PaneHead>
            </Pane>

            <Pane>
              <StrengthChart />
              <PaneHead>
                <Legend>
                  <LegendItem $color="#f0f0f0">
                    牛股起飞 <span>锁定: +73.20</span>
                    <ThinArrow dir="d" />
                  </LegendItem>
                  {legend.map(([text, color, dir]) => (
                    <LegendItem key={text} $color={color}>{text}{dir && <ThinArrow dir={dir} />}</LegendItem>
                  ))}
                </Legend>
                <InfoButton>指标说明</InfoButton>
              </PaneHead>
              <GrayMark>
                分析家公式网<WatermarkUrl $size={42} $bold>www.88gs.com</WatermarkUrl>
              </GrayMark>
            </Pane>

            <DateAxis>
              {dates.map(([label, left]) => <DateLabel key={label} $left={left}>{label}</DateLabel>)}
              <DateNow>2015-11-24,二</DateNow>
            </DateAxis>

            <TabRow>
              <PlainTab>设置</PlainTab>
              <PlainTab>指标平台</PlainTab>
              <SlantGroup>
                {indicatorTabs.map(tab => <SlantTab key={tab}>{tab}</SlantTab>)}
                <ActiveTab>牛股起飞</ActiveTab>
              </SlantGroup>
            </TabRow>
          </Main>

          <Axis>
            <AxisPane>
              <AxisLabel $y={20}>37.21</AxisLabel>
              <AxisLabel $y={98}>31.61</AxisLabel>
              <AxisLabel $y={178}>26.02</AxisLabel>
              <AxisLabel $y={258}>20.35</AxisLabel>
              <AxisLabel $y={337}>14.76</AxisLabel>
              <AxisNow>31.12</AxisNow>
            </AxisPane>
            <AxisPane>
              <AxisLabel $y={21}>77172</AxisLabel>
              <AxisLabel $y={50}>39240</AxisLabel>
              <AxisUnit>X10</AxisUnit>
            </AxisPane>
            <AxisPane $open>
              <AxisLabel $y={21}>+195.3</AxisLabel>
              <AxisLabel $y={73}>+113.1</AxisLabel>
              <AxisLabel $y={125}>+30.90</AxisLabel>
            </AxisPane>
          </Axis>

          <Quote>
            <QuoteHead>
              <Stars width="40" height="13" viewBox="0 0 40 13">
                {[0, 13, 26].map(x => (
                  <path
                    key={x}
                    transform={`translate(${x} 0)`}
                    d="M7 0l2 4.500 4.500.3-3.500 3 1.200 4.700L7 10l-4 2.500L4 7.800.500 4.800 5 4.500z"
                    fill="#e81c1c"
                  />
                ))}
              </Stars>
              宁波中百
              <Code>600857</Code>
              <svg width="16" height="16" viewBox="-8 -8 16 16">
                <circle r="8" fill="#2c80d8" />
                <path d="M0 0V-8A8 8 0 0 0-8 1z" fill="#e04020" />
                <path d="M0 0V-8A8 8 0 0 1 8 1z" fill="#38b038" />
                <path d="M0 0L8 1A8 8 0 0 1-1 8z" fill="#f0b820" />
              </svg>
            </QuoteHead>
            <Ratio>
              <BigLabel>委比</BigLabel>
              <Num $color="green">-1.18%</Num>
              <Num $color="green">-15</Num>
            </Ratio>
            <BookWrap>
              <Book>
                <BookRows side={['卖', '盘']} rows={sells} />
                <BookRows side={['买', '盘']} rows={buys} />
              </Book>
            </BookWrap>
            <Notice href="#orders">
              <span>在买盘18.05位置有</span>
              <Hot>188手</Hot>
              <span>买单! 查看详细</span>
            </Notice>
            <Stats>
              {stats.map(([label, value, color, unit]) => (
                <Stat key={label}>
                  <dt><BigLabel>{label}</BigLabel></dt>
                  <dd><Num $color={color}>{value}{unit && <small>{unit}</small>}</Num></dd>
                </Stat>
              ))}
            </Stats>
            <Sector>
              <SectorName>贸易</SectorName>
              <SectorRate>0.99%</SectorRate>
              <Compare>同行业比较</Compare>
            </Sector>
            <TickWrap>
              <Ticks>
                <tbody>
                  {ticks.map(([time, price, amount, dir], i) => (
                    <tr key={i}>
                      <TickCell $left $width={40}><Num $color="white">{time}</Num></TickCell>
                      <TickCell $width={77}><Num $color="green">{price}</Num></TickCell>
                      <TickCell $width={75}>
                        <TickVolume>
                          <Num $color={dir === 'u' ? 'red' : 'green'}>{amount}</Num>
                          <FatArrow dir={dir} />
                        </TickVolume>
                      </TickCell>
                      <TickCell><Num $color="cyan">1</Num></TickCell>
                    </tr>
                  ))}
                </tbody>
              </Ticks>
            </TickWrap>
            <SmallTabs>
              <SmallActive>细</SmallActive>
              {['诊', '分', '筹', '焰', '指'].map(tab => <SlantTab key={tab} $fill>{tab}</SlantTab>)}
              <FinalTab>财</FinalTab>
            </SmallTabs>
          </Quote>
        </Body>

        <IndexBar>
          <IndexCell $cols="33px 72px 103px">
            <Num $color="green">-1.03</Num>
            <Num $color="green">-0.03%</Num>
            <Num $color="cyan">3654<small>亿</small></Num>
          </IndexCell>
          <IndexCell $cols="24px 88px 86px 76px 98px">
            <IndexName>深</IndexName>
            <Num $color="red">12830.25</Num>
            <Num $color="red">+4.77</Num>
            <Num $color="red">+0.04%</Num>
            <Num $color="cyan">5935<small>亿</small></Num>
          </IndexCell>
          <IndexCell $cols="24px 90px 75px 75px 112px">
            <IndexName>创</IndexName>
            <Num $color="green">2830.26</Num>
            <Num $color="green">-5.44</Num>
            <Num $color="green">-0.19%</Num>
            <Num $color="cyan">1501<small>亿</small></Num>
          </IndexCell>
          <IndexCell $cols="64px 138px 64px 102px 1fr">
            <IndexName>沪深<b>300</b></IndexName>
            <Num $color="red">3767.91</Num>
            <Num $color="red">+12.02</Num>
            <Num $color="red">+0.32%</Num>
            <WrenchButton aria-label="设置">
              <svg width="13" height="13" viewBox="0 0 13 13">
                <path d="M1 2l2 2 1.500-1.500L3 .500a3.500 3.500 0 0 1 4.500 4.500l5 5-2 2-5-5A3.500 3.500 0 0 1 1 2z" fill="#888" />
              </svg>
            </WrenchButton>
          </IndexCell>
        </IndexBar>

        <NewsBar>
          <CutTab>发布日记</CutTab>
          <NewsTab>股灵通</NewsTab>
          <NewsTab>行情</NewsTab>
          <NewsTab>24小时滚动</NewsTab>
          <News href="#news-1">批登陆上股交“科创板”</News>
          <News href="#news-2">13:24 券商整体看多2016年 迎来真正“慢牛”</News>
          <Search aria-label="搜索" placeholder="代码/名称/简拼/功能" />
          <Clock>01:55:32</Clock>
          <Promo href="#download">股票公式股票软件下载[分析家公式网<PromoUrl>www.88gs.com]</PromoUrl></Promo>
        </NewsBar>
      </Frame>
    </Page>
  );
};

export default App;
